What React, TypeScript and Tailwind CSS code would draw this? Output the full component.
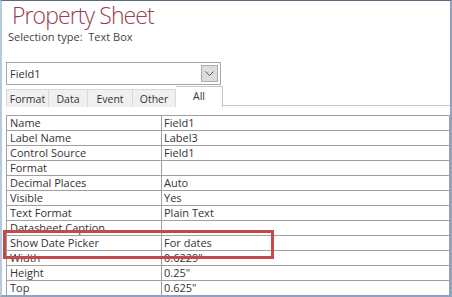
import React from "react";

const rows: [string, string][] = [
  ["Name", "Field1"],
  ["Label Name", "Label3"],
  ["Control Source", "Field1"],
  ["Format", ""],
  ["Decimal Places", "Auto"],
  ["Visible", "Yes"],
  ["Text Format", "Plain Text"],
  ["Datasheet Caption", ""],
  ["Show Date Picker", "For dates"],
  ["Width", "0.6229\""],
  ["Height", "0.25\""],
  ["Top", "0.625\""],
];

const tabs: [string, string][] = [
  ["Format", "w-[43px] border-l"],
  ["Data", "w-[39px]"],
  ["Event", "w-[45px]"],
  ["Other", "w-[43px]"],
];

const App: React.FC = () => {
  return (
    <div className="relative w-[452px] h-[297px] overflow-hidden bg-white border-t border-t-[#5b6b7f] border-l-2 border-l-[#b9c8dc] border-r-2 border-r-[#8fa3c0] border-b-2 border-b-[#8fa3c0] font-['Open_Sans','Noto_Sans',sans-serif] text-[#333333]">
      <div className="pl-[10px] h-[28px]">
        <h1 className="text-[23px] leading-[28px] font-light tracking-[-0.9px] text-[#96404f] whitespace-nowrap">
          Property Sheet
        </h1>
      </div>
      <p className="pl-[6px] h-[16px] text-[11px] leading-[16px] text-[#444444] whitespace-nowrap">
        Selection type:&nbsp; Text Box
      </p>

      <div className="ml-[4px] mt-[17px] w-[215px] h-[23px] border border-[#a6a6a6] flex items-center justify-between pl-[3px] pr-[2px]">
        <span className="text-[11px] leading-[14px]">Field1</span>
        <div className="w-[17px] h-[17px] bg-[#dddddd] border border-[#adadad] flex items-center justify-center">
          <svg width="9" height="6" viewBox="0 0 9 6">
            <polyline points="0.5,0.5 4.5,4.5 8.5,0.5" fill="none" stroke="#555555" strokeWidth="1" />
          </svg>
        </div>
      </div>

      <div className="ml-[4px] mt-[1px] w-[444px] h-[21px] flex items-end">
        {tabs.map(([t, w]) => (
          <div
            key={t}
            className={`h-[18px] bg-[#f0f0f0] border-t border-r border-[#d9d9d9] flex items-center justify-center text-[10.5px] leading-[14px] text-[#333333] ${w}`}
          >
            {t}
          </div>
        ))}
        <div className="w-[47px] h-[21px] bg-white border-t border-r border-[#c6c6c6] flex items-center justify-center text-[10.5px] leading-[14px] pb-[3px]">
          All
        </div>
        <div className="flex-1 h-[1px] mb-[1px] bg-[#c6c6c6]" />
      </div>

      <div className="ml-[4px] mt-[8px] w-[444px] border-t border-l border-r border-[#a0a0a0]">
        {rows.map(([k, v]) => (
          <div key={k} className="flex h-[15px] border-b border-[#a0a0a0] text-[11px] leading-[14px] text-[#333333]">
            <div className="w-[155px] shrink-0 border-r border-[#a0a0a0] pl-[3px] whitespace-nowrap">{k}</div>
            <div className="flex-1 pl-[2px] whitespace-nowrap">{v}</div>
          </div>
        ))}
      </div>

      <div className="absolute left-[1px] top-[229px] w-[271px] h-[29px] border-[3px] border-[#c5484a]" />
    </div>
  );
};

export default App;
